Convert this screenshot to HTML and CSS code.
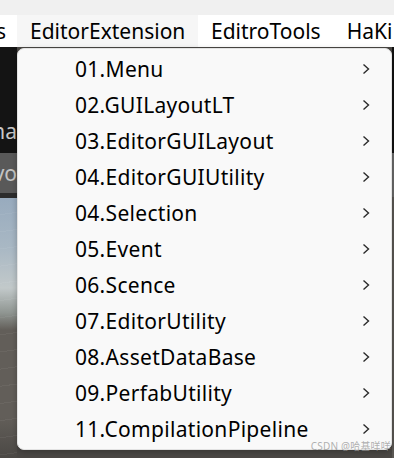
FILE: index.html
```html
<!DOCTYPE html>
<html lang="en">
<head>
    <meta charset="UTF-8">
    <title>Editor Menu</title>
    <link rel="stylesheet" href="styles.css">
</head>
<body>

<div class="titlebar"></div>

<!-- Top menu bar -->
<div class="menubar">
    <span class="bar-item cut"><span>s</span></span>
    <span class="bar-item active">EditorExtension</span>
    <span class="bar-item">EditroTools</span>
    <span class="bar-item">HaKi</span>
</div>

<!-- Editor area behind the popup -->
<div class="workspace">
    <div class="side">
        <div class="side-dark"><span>ma</span></div>
        <div class="side-bar"><span>vo</span></div>
        <div class="side-line"></div>
        <div class="side-scene"></div>
    </div>
    <div class="center"></div>
    <div class="edge"></div>
</div>

<!-- Dropdown menu -->
<div class="dropdown">
    <div class="menu-item"><span>01.Menu</span><svg class="chev" viewBox="0 0 8 12"><polyline points="1.5,1.5 6.5,6 1.5,10.5"/></svg></div>
    <div class="menu-item"><span>02.GUILayoutLT</span><svg class="chev" viewBox="0 0 8 12"><polyline points="1.5,1.5 6.5,6 1.5,10.5"/></svg></div>
    <div class="menu-item"><span>03.EditorGUILayout</span><svg class="chev" viewBox="0 0 8 12"><polyline points="1.5,1.5 6.5,6 1.5,10.5"/></svg></div>
    <div class="menu-item"><span>04.EditorGUIUtility</span><svg class="chev" viewBox="0 0 8 12"><polyline points="1.5,1.5 6.5,6 1.5,10.5"/></svg></div>
    <div class="menu-item"><span>04.Selection</span><svg class="chev" viewBox="0 0 8 12"><polyline points="1.5,1.5 6.5,6 1.5,10.5"/></svg></div>
    <div class="menu-item"><span>05.Event</span><svg class="chev" viewBox="0 0 8 12"><polyline points="1.5,1.5 6.5,6 1.5,10.5"/></svg></div>
    <div class="menu-item"><span>06.Scence</span><svg class="chev" viewBox="0 0 8 12"><polyline points="1.5,1.5 6.5,6 1.5,10.5"/></svg></div>
    <div class="menu-item"><span>07.EditorUtility</span><svg class="chev" viewBox="0 0 8 12"><polyline points="1.5,1.5 6.5,6 1.5,10.5"/></svg></div>
    <div class="menu-item"><span>08.AssetDataBase</span><svg class="chev" viewBox="0 0 8 12"><polyline points="1.5,1.5 6.5,6 1.5,10.5"/></svg></div>
    <div class="menu-item"><span>09.PerfabUtility</span><svg class="chev" viewBox="0 0 8 12"><polyline points="1.5,1.5 6.5,6 1.5,10.5"/></svg></div>
    <div class="menu-item"><span>11.CompilationPipeline</span><svg class="chev" viewBox="0 0 8 12"><polyline points="1.5,1.5 6.5,6 1.5,10.5"/></svg></div>
</div>

<div class="watermark">CSDN @哈基咩咩</div>

</body>
</html>
```

FILE: styles.css
```css
body {
    margin: 0;
    width: 394px;
    height: 458px;
    overflow: hidden;
    position: relative;
    font-family: 'Noto Sans', 'Noto Sans CJK SC', sans-serif;
    background: #4a4744;
}

.titlebar {
    height: 15px;
    background: #f0f0f0;
}

/* Menu bar */
.menubar {
    height: 32px;
    background: #fff;
    display: flex;
    align-items: stretch;
    font-size: 21px;
    color: #000;
    white-space: nowrap;
    overflow: hidden;
}

.bar-item {
    flex-shrink: 0;
    display: flex;
    align-items: center;
    padding: 0 13px;
}

.bar-item.cut {
    width: 17px;
    padding: 0;
    box-sizing: border-box;
    overflow: hidden;
}

.bar-item.cut span {
    margin-left: -4px;
}

.bar-item.active {
    background: #f6f6f6;
    width: 181px;
    box-sizing: border-box;
}

/* Editor background */
.workspace {
    display: flex;
    height: 411px;
}

.side {
    width: 17px;
    display: flex;
    flex-direction: column;
    overflow: hidden;
}

.side-dark {
    height: 106px;
    background: #141414;
    color: #c8c8c8;
    font-size: 21px;
    display: flex;
    align-items: flex-end;
    justify-content: flex-end;
    padding-bottom: 8px;
    box-sizing: border-box;
}

.side-bar {
    height: 40px;
    background: #595959;
    color: #c4c4c4;
    font-size: 21px;
    display: flex;
    align-items: center;
    justify-content: flex-end;
}

.side-line {
    height: 5px;
    background: #2c2c2c;
}

.side-scene {
    flex: 1;
    background:
        repeating-linear-gradient(172deg, transparent 0 16px, rgba(255, 255, 255, 0.05) 16px 17px),
        linear-gradient(#98abbe 0, #a9b8c4 50px, #c2c9ca 90px, #8f9591 115px, #625e59 132px, #625e59 220px, #4b4845 100%);
}

.center {
    flex: 1;
}

.edge {
    width: 2px;
    background: linear-gradient(#111 0, #111 106px, #6a6a6a 106px, #6a6a6a 150px, #5b5854 150px);
}

/* Dropdown popup (overlay) */
.dropdown {
    position: absolute;
    left: 17px;
    top: 48px;
    width: 375px;
    height: 402px;
    box-sizing: border-box;
    padding-top: 2px;
    background: #f9f9f9;
    border: 1px solid #e2e2e2;
    border-radius: 7px;
    box-shadow: 0 2px 6px rgba(0, 0, 0, 0.25);
}

.menu-item {
    height: 36px;
    display: flex;
    align-items: center;
    justify-content: space-between;
    padding-left: 57px;
    padding-right: 21px;
    font-size: 21px;
    letter-spacing: 0.3px;
    color: #000;
}

.chev {
    width: 8px;
    height: 12px;
}

.chev polyline {
    fill: none;
    stroke: #2b2b2b;
    stroke-width: 1.4;
}

.watermark {
    position: absolute;
    right: 3px;
    bottom: 5px;
    font-size: 10px;
    color: rgba(150, 150, 150, 0.75);
    letter-spacing: 0.2px;
}
```
